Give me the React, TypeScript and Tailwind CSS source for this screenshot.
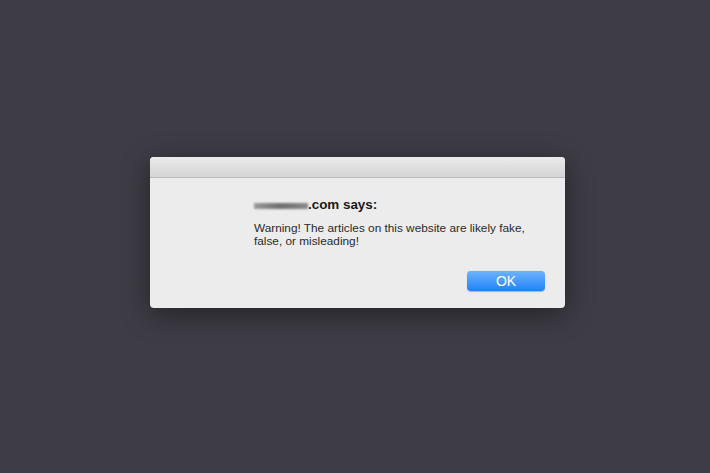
import React from 'react';

const App = () => {
  return (
    <div className="w-[710px] h-[473px] bg-[#3e3d46] flex items-start justify-start pl-[150px] pt-[157px] font-['Liberation_Sans',Arial,sans-serif]">
      <div className="w-[415px] h-[151px] bg-[#ececec] rounded-[4px] flex flex-col overflow-hidden shadow-[0_6px_28px_rgba(0,0,0,0.45)]">
        {/* title bar */}
        <div className="h-[21px] shrink-0 bg-gradient-to-b from-[#ebebeb] to-[#d4d4d4] border-b border-[#b9b9b9]" />

        <div className="flex-1 flex flex-col pl-[104px] pr-[19px] pt-[18px]">
          <div className="flex items-center h-[18px]">
            <div className="w-[54px] h-[6px] mt-[1px] bg-gradient-to-r from-[#9a9a9a] via-[#6e6e6e] to-[#8a8a8a] blur-[1px]" />
            <span className="text-[13.4px] font-bold text-[#1a1a1a] leading-none">.com says:</span>
          </div>
          <p className="mt-[8px] text-[11.8px] leading-[13px] text-[#2a2a2a]">
            Warning! The articles on this website are likely fake,
            <br />
            false, or misleading!
          </p>
          <div className="flex justify-end mt-[23px] pr-[1px]">
            <button className="w-[78px] h-[20px] rounded-[4px] bg-gradient-to-b from-[#6cb3fb] to-[#1b82fa] text-white text-[14px] leading-none flex items-center justify-center shadow-[0_0.5px_1px_rgba(0,0,0,0.25)]">
              OK
            </button>
          </div>
        </div>
      </div>
    </div>
  );
};

export default App;
